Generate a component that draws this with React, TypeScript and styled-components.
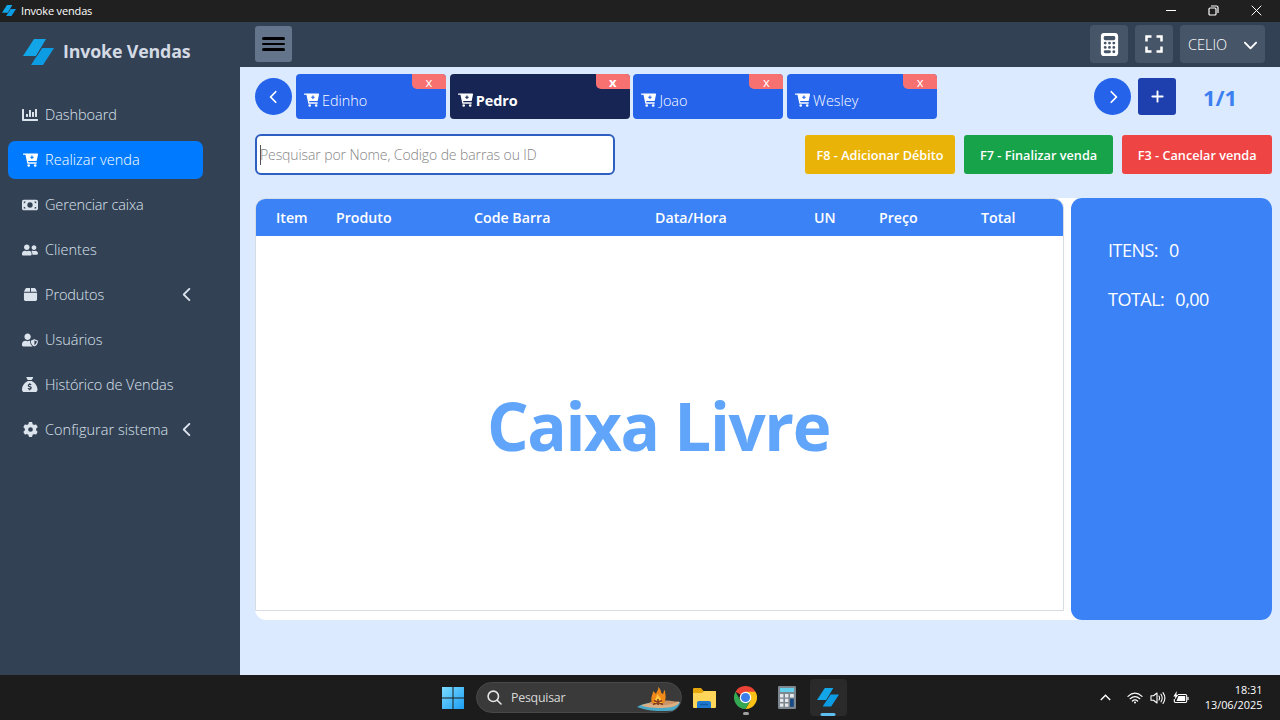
import React from "react";
import styled, { createGlobalStyle } from "styled-components";
import { FaChartBar, FaUserFriends, FaUserShield } from "react-icons/fa";
import { FaSackDollar, FaCalculator, FaMoneyBill, FaBox, FaGear, FaChevronLeft, FaChevronRight, FaChevronDown, FaPlus } from "react-icons/fa6";
import { MdFullscreen } from "react-icons/md";

const GlobalStyle = createGlobalStyle`
  * { box-sizing: border-box; }
  body { margin: 0; overflow: hidden; font-family: "Open Sans", "Noto Sans", sans-serif; }
  button, input { font: inherit; border: 0; padding: 0; }
`;

const Screen = styled.div`
  width: 1280px;
  height: 720px;
  display: flex;
  flex-direction: column;
  background: #334155;
`;

const TitleBar = styled.header`
  height: 22px;
  flex: none;
  display: flex;
  align-items: center;
  justify-content: space-between;
  padding: 0 18px 2px 2px;
  background: #202020;
  color: #fff;
`;
const AppName = styled.div`
  display: flex;
  align-items: center;
  gap: 5px;
  padding-top: 1px;
  font-size: 11px;
  letter-spacing: -0.16px;
  line-height: 16px;
`;
const WindowControls = styled.div`
  display: flex;
  align-items: center;
  gap: 32px;
`;

const Shell = styled.div`
  height: 653px;
  flex: none;
  display: flex;
`;
const Sidebar = styled.aside`
  width: 240px;
  flex: none;
  padding: 11px 8px 0;
  color: #dbe3ec;
`;
const Brand = styled.div`
  display: flex;
  align-items: center;
  gap: 9px;
  height: 38px;
  padding-left: 15px;
  font-weight: 700;
  font-size: 17.8px;
  letter-spacing: -0.15px;
  color: #d3dae4;
`;
const BrandName = styled.span`
  padding-bottom: 2px;
`;
const Nav = styled.nav`
  display: flex;
  flex-direction: column;
  gap: 7px;
  margin-top: 25px;
  margin-left: -0.5px;
`;
const NavItem = styled.a<{ $active?: boolean; $spacing?: number }>`
  width: 195px;
  height: 38px;
  display: flex;
  align-items: center;
  padding: 0 8px 1px 14.5px;
  border-radius: 7px;
  background: ${(p) => (p.$active ? "#007bff" : "transparent")};
  color: ${(p) => (p.$active ? "#fff" : "#dbe3ec")};
  font-size: 14.5px;
  font-weight: 300;
  letter-spacing: ${(p) => p.$spacing ?? 0}px;
  white-space: nowrap;
`;
const NavIcon = styled.span`
  width: 16px;
  margin-right: 7px;
  display: flex;
  justify-content: center;
`;
const NavLabel = styled.span`
  flex: 1;
  padding-bottom: 1px;
`;

const Content = styled.div`
  flex: 1;
  display: flex;
  flex-direction: column;
`;
const TopBar = styled.div`
  height: 45px;
  flex: none;
  display: flex;
  align-items: center;
  gap: 7px;
  padding: 0 15px 1px;
`;
const MenuButton = styled.button`
  width: 37px;
  height: 36px;
  margin-right: auto;
  display: flex;
  flex-direction: column;
  align-items: center;
  justify-content: center;
  gap: 3px;
  border-radius: 3px;
  background: #64748b;
`;
const MenuBar = styled.span`
  width: 23px;
  height: 2.7px;
  border-radius: 1.5px;
  background: #000;
`;
const ToolButton = styled.button`
  width: 38px;
  height: 38px;
  display: flex;
  align-items: center;
  justify-content: center;
  border-radius: 4px;
  background: #475569;
  color: #fff;
`;
const UserButton = styled(ToolButton)`
  width: 85px;
  justify-content: space-between;
  padding: 0 7px 0 8px;
  font-size: 14.5px;
  font-weight: 300;
`;

const Main = styled.main`
  flex: 1;
  display: flex;
  flex-direction: column;
  padding: 7px 8px 0 15px;
  background: #dbeafe;
`;
const TabRow = styled.div`
  height: 45px;
  display: flex;
  align-items: center;
`;
const RoundButton = styled.button`
  width: 37px;
  height: 37px;
  flex: none;
  display: flex;
  align-items: center;
  justify-content: center;
  border-radius: 50%;
  background: #2563eb;
  color: #fff;
`;
const Tabs = styled.div`
  flex: 1;
  display: flex;
  gap: 3.7px;
  margin-left: 4px;
`;
const Tab = styled.div<{ $active?: boolean }>`
  position: relative;
  width: ${(p) => (p.$active ? 180 : 150)}px;
  height: 45px;
  display: flex;
  align-items: center;
  gap: 3px;
  padding: 7px 0 0 8px;
  border-radius: 4px;
  overflow: hidden;
  background: ${(p) => (p.$active ? "#172554" : "#2563eb")};
  color: #fff;
  font-size: 14.4px;
  font-weight: ${(p) => (p.$active ? 700 : 300)};
`;
const TabClose = styled.button<{ $active?: boolean }>`
  position: absolute;
  top: 0;
  right: 0;
  width: 34px;
  height: 15px;
  padding-top: 1px;
  border-radius: 0 0 0 5px;
  background: #f87171;
  color: #fff;
  font-size: 13px;
  font-weight: ${(p) => (p.$active ? 700 : 400)};
  line-height: 12px;
`;
const AddButton = styled(RoundButton)`
  width: 38px;
  margin-left: 7px;
  border-radius: 3px;
  background: #1e40af;
`;
const PageCount = styled.div`
  width: 96px;
  padding-right: 8px;
  text-align: center;
  color: #3b7ff0;
  font-size: 22px;
  font-weight: 700;
`;

const ActionRow = styled.div`
  height: 41px;
  margin-top: 15px;
  display: flex;
  align-items: center;
  gap: 9px;
`;
const SearchField = styled.div`
  position: relative;
  margin-right: auto;
  display: flex;
`;
const SearchInput = styled.input`
  width: 359.5px;
  height: 41px;
  padding: 0 3px 0 3px;
  border: 2px solid #2d5fc0;
  border-radius: 6px;
  background: #fff;
  color: #333;
  font-size: 14px;
  font-weight: 300;
  letter-spacing: -0.1px;
  outline: none;
  &::placeholder { color: #858585; opacity: 1; }
`;
const Caret = styled.span`
  position: absolute;
  left: 5px;
  top: 11px;
  width: 1px;
  height: 20px;
  background: #555;
`;
const ActionButton = styled.button<{ $color: string }>`
  width: 149.6px;
  height: 39px;
  border-radius: 3px;
  background: ${(p) => p.$color};
  color: #fff;
  font-size: 12.7px;
  font-weight: 600;
  white-space: nowrap;
`;

const SalePanel = styled.section`
  height: 422px;
  margin-top: 23px;
  display: flex;
  justify-content: space-between;
  border-radius: 11px;
  background: #fff;
`;
const Table = styled.div`
  width: 809px;
  height: 413px;
  display: flex;
  flex-direction: column;
  border: 1px solid #d5dce4;
  border-radius: 10px 10px 0 0;
  overflow: hidden;
`;
const TableHead = styled.div`
  height: 37px;
  flex: none;
  display: grid;
  grid-template-columns: 60px 138px 181px 159px 65px 102px 1fr;
  align-items: center;
  padding-left: 20px;
  background: #3b82f6;
  color: #fff;
  font-size: 14.2px;
  font-weight: 600;
`;
const TableBody = styled.div`
  flex: 1;
  display: flex;
  align-items: center;
  justify-content: center;
  padding: 4px 2px 0 0;
  color: #60a5fa;
  font-size: 65.5px;
  font-weight: 700;
  letter-spacing: -1.4px;
`;
const Summary = styled.aside`
  width: 201.5px;
  padding: 37px 0 0 37.5px;
  border-radius: 11px;
  background: #3b82f6;
  color: #fff;
  font-size: 18px;
  font-weight: 400;
  letter-spacing: -0.5px;
`;
const SummaryLine = styled.div`
  height: 49px;
  line-height: 30px;
  display: flex;
  gap: 11px;
`;

const Taskbar = styled.footer`
  height: 45px;
  flex: none;
  display: grid;
  grid-template-columns: 1fr auto 1fr;
  align-items: center;
  background: #1c1c1c;
  color: #fff;
`;
const Dock = styled.div`
  grid-column: 2;
  display: flex;
  align-items: center;
  padding-left: 9px;
`;
const SearchPill = styled.div`
  width: 206px;
  height: 31px;
  margin-left: 12px;
  margin-right: 2px;
  display: flex;
  align-items: center;
  gap: 9px;
  padding-left: 10px;
  border: 1px solid #484848;
  border-radius: 16px;
  background: #3a3a3a;
  color: #d8d8d8;
  font-size: 12.4px;
  letter-spacing: -0.25px;
  overflow: hidden;
`;
const Campfire = styled.svg`
  margin-left: auto;
  flex: none;
`;
const DockApp = styled.div<{ $open?: boolean }>`
  position: relative;
  width: ${(p) => (p.$open ? 37 : 41.3)}px;
  margin-left: ${(p) => (p.$open ? 2 : 0)}px;
  height: 37px;
  display: flex;
  align-items: center;
  justify-content: center;
  border-radius: 4px;
  background: ${(p) => (p.$open ? "#2a2a2a" : "transparent")};
`;
const Indicator = styled.span<{ $wide?: boolean }>`
  position: absolute;
  bottom: ${(p) => (p.$wide ? 0.5 : 1)}px;
  left: 50%;
  transform: translateX(-50%);
  width: ${(p) => (p.$wide ? 15 : 6)}px;
  height: 3px;
  border-radius: 2px;
  background: ${(p) => (p.$wide ? "#60bdf0" : "#a0a0a0")};
`;
const Tray = styled.div`
  display: flex;
  align-items: center;
  justify-content: flex-end;
  gap: 7px;
  padding-right: 17.5px;
`;
const TrayArrow = styled.svg`
  margin-right: 9px;
`;
const Clock = styled.div`
  width: 67px;
  text-align: right;
  font-size: 10.9px;
  line-height: 15px;
  padding-bottom: 2px;
`;

const Logo = ({ size }: { size: number }) => (
  <svg width={size} height={(size * 26) / 31} viewBox="0 0 31 26">
    <path d="M11 0H23L13 17H0Z" fill="#12a5e8" />
    <path d="M19 9H31L20 26H8Z" fill="#0c9ce4" />
    <path d="M18.8 8.6L13.3 17.4" stroke="#334155" strokeWidth="0.8" />
  </svg>
);

const CartIcon = () => (
  <svg width="15" height="14" viewBox="0 0 15 14" fill="currentColor">
    <path d="M0.5 1.2H3L4.9 10H13.2" fill="none" stroke="currentColor" strokeWidth="1.3" strokeLinecap="round" strokeLinejoin="round" />
    <path fillRule="evenodd" d="M3 0.6H14.4Q15.2 0.6 15 1.4L13.8 7.4Q13.6 8.1 12.9 8.1H4.5ZM8.4 2.6V3.8H7.2V4.8H8.4V6H9.5V4.8H10.7V3.8H9.5V2.6Z" />
    <circle cx="5.7" cy="12.5" r="1.3" />
    <circle cx="12.2" cy="12.5" r="1.3" />
  </svg>
);

const WindowsIcon = () => (
  <svg width="22" height="22" viewBox="0 0 22 22">
    <defs>
      <linearGradient id="win" x1="0" y1="0" x2="1" y2="1">
        <stop offset="0" stopColor="#7bdcff" />
        <stop offset="1" stopColor="#1b9df2" />
      </linearGradient>
    </defs>
    <path d="M0 0h10.5v10.5H0zM11.5 0H22v10.5H11.5zM0 11.5h10.5V22H0zM11.5 11.5H22V22H11.5z" fill="url(#win)" />
  </svg>
);

const CampfireScene = () => (
  <Campfire width="45" height="29" viewBox="0 0 45 29">
    <path d="M1 24C10 18 28 19 45 19V25C41 28 34 28 27 28C19 28 12 28 1 24Z" fill="#4ba9c8" />
    <path d="M5 22.5C14 18.5 21 20 43 18.5C44 21 40 23 36 24C24 25.5 16 25.5 5 22.5Z" fill="#dcae82" />
    <path d="M13 20C17 17 33 17 40 19C35 23 18 23 13 20Z" fill="#c89468" />
    <path d="M16 20C14 14 17 12 17 8C19 10 20 10 20 12C20 8 23 8 22 4C26 7 24 10 27 11C28 10 27 8 29 7C29 12 31 14 28 20Z" fill="#f18a18" />
    <path d="M19 20C18 16 21 15 21 11C24 14 25 15 26 20Z" fill="#ffc440" />
    <path d="M17 21.5L26 17.5M18 17.5L27 21.5M22 22V16" stroke="#84391b" strokeWidth="1.6" />
  </Campfire>
);

const FolderIcon = () => (
  <svg width="23" height="21" viewBox="0 0 23 21">
    <path d="M0 2Q0 1 1 1H8L10.5 4H22Q23 4 23 5V18H0Z" fill="#e5a50b" />
    <path d="M0 6H9L11 4H22Q23 4 23 5V20Q23 21 22 21H1Q0 21 0 20Z" fill="#ffd65a" />
    <path d="M4 21V16Q4 14 6 14H16Q18 14 18 16V21Z" fill="#1c79cf" />
    <path d="M7 17.5H15" stroke="#1259a0" strokeWidth="1.4" />
  </svg>
);

const ChromeIcon = () => (
  <svg width="23" height="23" viewBox="0 0 48 48">
    <path d="M24 24L3.2 12A24 24 0 0 1 44.8 12Z" fill="#ea4335" />
    <path d="M24 12H44.8A24 24 0 0 1 24 48L34.4 30Z" fill="#fbc116" />
    <path d="M3.2 12L13.6 30L24 36L34.4 30L24 48A24 24 0 0 1 3.2 12Z" fill="#34a853" />
    <circle cx="24" cy="24" r="12" fill="#fff" />
    <circle cx="24" cy="24" r="9.4" fill="#3b7de9" />
  </svg>
);

const DeskCalculatorIcon = () => (
  <svg width="18" height="23" viewBox="0 0 18 23">
    <rect width="18" height="23" rx="1.2" fill="#7d8790" />
    <rect x="2" y="2" width="14" height="4" fill="#62d0ec" />
    <path d="M2 8h3.4v3.4H2zM7 8h3.4v3.4H7zM12 8h3.8v3.4H12zM2 12.7h3.4v3.4H2zM7 12.7h3.4v3.4H7zM2 17.4h3.4v3.4H2zM7 17.4h3.4v3.4H7z" fill="#e4e8ec" />
    <path d="M12 12.7h3.8v8.1H12z" fill="#184b86" />
  </svg>
);

const NAV = [
  { label: "Dashboard", icon: <FaChartBar size={16} />, spacing: -0.06 },
  { label: "Realizar venda", icon: <CartIcon />, spacing: 0.04, active: true },
  { label: "Gerenciar caixa", icon: <FaMoneyBill size={16} />, spacing: -0.14 },
  { label: "Clientes", icon: <FaUserFriends size={16} />, spacing: 0 },
  { label: "Produtos", icon: <FaBox size={15} />, spacing: -0.1, group: true },
  { label: "Usuários", icon: <FaUserShield size={16} />, spacing: 0 },
  { label: "Histórico de Vendas", icon: <FaSackDollar size={15.5} />, spacing: -0.1 },
  { label: "Configurar sistema", icon: <FaGear size={15} />, spacing: 0.04, group: true },
];

const TABS = [
  { name: "Edinho" },
  { name: "Pedro", active: true },
  { name: "Joao" },
  { name: "Wesley" },
];

const COLUMNS = ["Item", "Produto", "Code Barra", "Data/Hora", "UN", "Preço", "Total"];

export default function App() {
  return (
    <Screen>
      <GlobalStyle />
      <TitleBar>
        <AppName>
          <Logo size={14} />
          Invoke vendas
        </AppName>
        <WindowControls>
          <svg width="10" height="11" viewBox="0 0 10 11"><path d="M0 5.5H10" stroke="#fff" /></svg>
          <svg width="11" height="11" viewBox="0 0 11 11" fill="none" stroke="#fff" strokeWidth="1.2">
            <rect x="1" y="3" width="7" height="7" rx="1" />
            <path d="M3 1H8.5Q10 1 10 2.5V8" />
          </svg>
          <svg width="11" height="11" viewBox="0 0 11 11"><path d="M0.7 0.7L10.3 10.3M10.3 0.7L0.7 10.3" stroke="#fff" /></svg>
        </WindowControls>
      </TitleBar>

      <Shell>
        <Sidebar>
          <Brand>
            <Logo size={31} />
            <BrandName>Invoke Vendas</BrandName>
          </Brand>
          <Nav>
            {NAV.map((item) => (
              <NavItem key={item.label} $active={item.active} $spacing={item.spacing}>
                <NavIcon>{item.icon}</NavIcon>
                <NavLabel>{item.label}</NavLabel>
                {item.group && <FaChevronLeft size={15} />}
              </NavItem>
            ))}
          </Nav>
        </Sidebar>

        <Content>
          <TopBar>
            <MenuButton>
              <MenuBar />
              <MenuBar />
              <MenuBar />
            </MenuButton>
            <ToolButton><FaCalculator size={23} /></ToolButton>
            <ToolButton><MdFullscreen size={30} /></ToolButton>
            <UserButton>
              CELIO
              <FaChevronDown size={15} />
            </UserButton>
          </TopBar>

          <Main>
            <TabRow>
              <RoundButton><FaChevronLeft size={14} /></RoundButton>
              <Tabs>
                {TABS.map((tab) => (
                  <Tab key={tab.name} $active={tab.active}>
                    <CartIcon />
                    {tab.name}
                    <TabClose $active={tab.active}>x</TabClose>
                  </Tab>
                ))}
              </Tabs>
              <RoundButton><FaChevronRight size={14} /></RoundButton>
              <AddButton><FaPlus size={15} /></AddButton>
              <PageCount>1/1</PageCount>
            </TabRow>

            <ActionRow>
              <SearchField>
                <SearchInput placeholder="Pesquisar por Nome, Codigo de barras ou ID" />
                <Caret />
              </SearchField>
              <ActionButton $color="#eab308">F8 - Adicionar Débito</ActionButton>
              <ActionButton $color="#16a34a">F7 - Finalizar venda</ActionButton>
              <ActionButton $color="#ef4444">F3 - Cancelar venda</ActionButton>
            </ActionRow>

            <SalePanel>
              <Table>
                <TableHead>
                  {COLUMNS.map((c) => <span key={c}>{c}</span>)}
                </TableHead>
                <TableBody>Caixa Livre</TableBody>
              </Table>
              <Summary>
                <SummaryLine><span>ITENS:</span><span>0</span></SummaryLine>
                <SummaryLine><span>TOTAL:</span><span>0,00</span></SummaryLine>
              </Summary>
            </SalePanel>
          </Main>
        </Content>
      </Shell>

      <Taskbar>
        <Dock>
          <WindowsIcon />
          <SearchPill>
            <svg width="15" height="15" viewBox="0 0 15 15" fill="none" stroke="#e6e6e6" strokeWidth="1.6" strokeLinecap="round">
              <circle cx="6.3" cy="6.3" r="5.2" />
              <path d="M10.2 10.2L14 14" />
            </svg>
            Pesquisar
            <CampfireScene />
          </SearchPill>
          <DockApp><FolderIcon /></DockApp>
          <DockApp><ChromeIcon /><Indicator /></DockApp>
          <DockApp><DeskCalculatorIcon /></DockApp>
          <DockApp $open><Logo size={22} /><Indicator $wide /></DockApp>
        </Dock>
        <Tray>
          <TrayArrow width="11" height="7" viewBox="0 0 11 7" fill="none" stroke="#fff" strokeWidth="1.4"><path d="M0.8 6L5.5 1.3L10.2 6" /></TrayArrow>
          <svg width="16" height="12" viewBox="0 0 16 12" fill="none" stroke="#fff" strokeWidth="1.2" strokeLinecap="round">
            <path d="M1 4.4Q8 -2 15 4.4M3.2 6.7Q8 2.4 12.8 6.7M5.4 9Q8 6.8 10.6 9" />
            <circle cx="8" cy="10.4" r="1" fill="#fff" stroke="none" />
          </svg>
          <svg width="16" height="14" viewBox="0 0 16 14" fill="none" stroke="#fff" strokeWidth="1.1" strokeLinecap="round" strokeLinejoin="round">
            <path d="M1 4.8H3.5L7 2V12L3.5 9.2H1ZM9 5Q10.2 7 9 9M11 3.2Q13.4 7 11 10.8M13 1.6Q16.8 7 13 12.4" />
          </svg>
          <svg width="16" height="14" viewBox="0 0 16 14">
            <path d="M5 3.5H12.5Q13.7 3.5 13.7 4.7V10.3Q13.7 11.5 12.5 11.5H2.5Q1.3 11.5 1.3 10.3V8" fill="none" stroke="#fff" strokeWidth="1.1" />
            <path d="M5.4 5H12.2V10H3.5ZM14.4 6H15.6V9H14.4ZM3.8 0L0.4 5.4H2.4L1.6 9L5.4 3.8H3.4Z" fill="#fff" />
          </svg>
          <Clock>
            18:31
            <br />
            13/06/2025
          </Clock>
        </Tray>
      </Taskbar>
    </Screen>
  );
}
